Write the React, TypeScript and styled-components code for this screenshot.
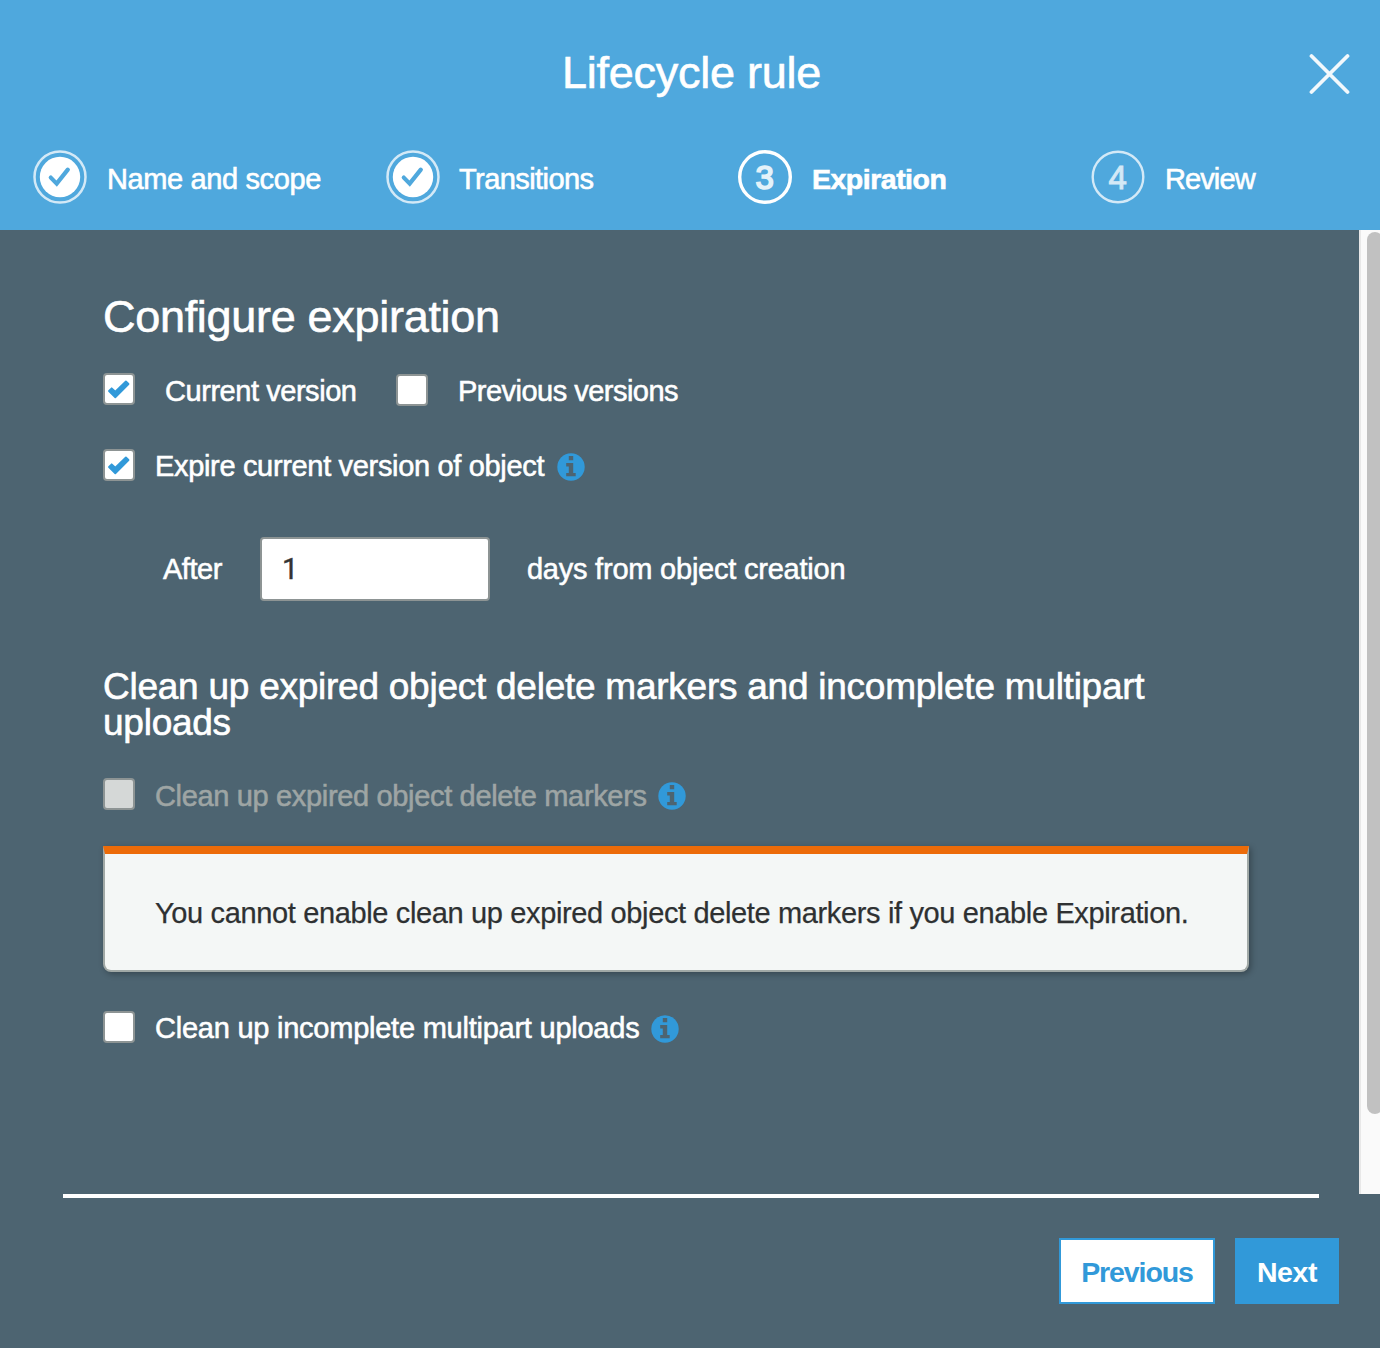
import React, { useState } from "react";
import styled, { createGlobalStyle } from "styled-components";

const Global = createGlobalStyle`
  * { box-sizing: border-box; }
  html, body { margin: 0; padding: 0; }
  body {
    font-family: "Liberation Sans", Arial, sans-serif;
    font-size: 29px;
    color: #fff;
    background: #4d6471;
  }
`;

const Dialog = styled.div`
  width: 1380px;
  height: 1348px;
  display: flex;
  flex-direction: column;
  background: #4d6471;
  overflow: hidden;
`;

const Header = styled.header`
  height: 230px;
  flex: none;
  padding-top: 47px;
  background: #4fa8dd;
`;

const TitleBar = styled.div`
  display: grid;
  grid-template-columns: 80px 1fr 80px;
  align-items: center;
  height: 52px;
`;

const Title = styled.h1`
  grid-column: 2;
  margin: 0;
  padding-left: 3px;
  text-align: center;
  font-size: 45px;
  font-weight: 400;
  line-height: 52px;
  letter-spacing: -0.25px;
  -webkit-text-stroke: 0.6px currentColor;
`;

const CloseButton = styled.button`
  width: 42px;
  height: 42px;
  margin: 2px 0 0 8px;
  padding: 0;
  border: 0;
  background: none;
  color: #fff;
  svg { display: block; }
`;

const Steps = styled.ol`
  display: grid;
  grid-template-columns: 353px 352px 353px 1fr;
  list-style: none;
  margin: 51px 0 0;
  padding: 0 0 0 33px;
`;

const Step = styled.li<{ $gap?: number }>`
  display: flex;
  gap: ${(p) => p.$gap ?? 20}px;
  height: 54px;
  svg { flex: none; display: block; }
`;

const StepLabel = styled.span<{ $active?: boolean; $track?: number }>`
  padding-top: 2px;
  line-height: 54px;
  white-space: nowrap;
  font-size: ${(p) => (p.$active ? 28.5 : 29)}px;
  font-weight: ${(p) => (p.$active ? 700 : 400)};
  letter-spacing: ${(p) => p.$track ?? 0}px;
  -webkit-text-stroke: 0.6px currentColor;
`;

const Main = styled.div`
  display: flex;
  height: 964px;
  flex: none;
`;

const Content = styled.main`
  width: 1359px;
  flex: none;
  padding: 65px 110px 0 103px;
`;

const ScrollTrack = styled.div`
  flex: 1;
  overflow: hidden;
  padding: 2px 0 0 6px;
  border-left: 2px solid #e8e8e8;
  background: #fafafa;
`;

const ScrollThumb = styled.div`
  width: 16px;
  height: 882px;
  border-radius: 8px;
  background: #c1c1c1;
`;

const Heading = styled.h2`
  margin: 0;
  font-size: 45px;
  font-weight: 400;
  line-height: 44px;
  letter-spacing: -0.3px;
  -webkit-text-stroke: 0.6px currentColor;
`;

const Subheading = styled.h3`
  margin: 68px 0 0;
  font-size: 37px;
  font-weight: 400;
  line-height: 36px;
  letter-spacing: -0.25px;
  -webkit-text-stroke: 0.6px currentColor;
`;

const Row = styled.div<{ $top: number; $gap?: number }>`
  display: flex;
  align-items: flex-start;
  height: 34px;
  margin-top: ${(p) => p.$top}px;
  gap: ${(p) => p.$gap ?? 0}px;
`;

const Option = styled.label<{ $gap?: number; $disabled?: boolean }>`
  display: flex;
  align-items: flex-start;
  gap: ${(p) => p.$gap ?? 20}px;
  color: ${(p) => (p.$disabled ? "#9ea5a4" : "#fff")};
`;

const Box = styled.span<{ $disabled?: boolean; $drop?: number }>`
  display: block;
  width: 32px;
  height: 32px;
  flex: none;
  margin-top: ${(p) => p.$drop ?? 0}px;
  border: 2px solid #8d9494;
  border-radius: 4px;
  background: ${(p) => (p.$disabled ? "#d5d8d7" : "#fff")};
  svg { display: block; }
`;

const Caption = styled.span<{ $track?: number; $line?: number }>`
  line-height: ${(p) => p.$line ?? 35}px;
  white-space: nowrap;
  letter-spacing: ${(p) => p.$track ?? 0}px;
  -webkit-text-stroke: 0.55px currentColor;
`;

const InfoSlot = styled.span<{ $left: number }>`
  display: block;
  margin-left: ${(p) => p.$left}px;
  margin-top: 4px;
  svg { display: block; }
`;

const DaysRow = styled.div`
  display: flex;
  align-items: center;
  height: 64px;
  margin-top: 54px;
  padding-left: 60px;
`;

const DaysInput = styled.input`
  width: 230px;
  height: 64px;
  margin: 0 37px 0 38px;
  padding: 0 0 0 20px;
  border: 2px solid #8d9494;
  border-radius: 4px;
  background: #fff;
  color: #333;
  font: 29px Roboto, "Liberation Sans", sans-serif;
  -webkit-text-stroke: 0.4px currentColor;
  outline: none;
`;

const Alert = styled.div`
  width: 1146px;
  height: 126px;
  margin-top: 34px;
  padding-left: 50px;
  border: 2px solid #a1a9a6;
  border-top: 8px solid #ec6b09;
  border-radius: 0 0 8px 8px;
  background: #f4f7f6;
  box-shadow: 2px 2px 6px rgba(0, 0, 0, 0.3);
  color: #2e3132;
  line-height: 119px;
  letter-spacing: -0.36px;
  white-space: nowrap;
  -webkit-text-stroke: 0.25px currentColor;
`;

const Footer = styled.footer`
  flex: 1;
  display: flex;
  flex-direction: column;
  padding: 0 41px 0 63px;
`;

const Rule = styled.hr`
  width: 1256px;
  height: 4px;
  margin: 0;
  border: 0;
  background: #fff;
`;

const Buttons = styled.div`
  display: flex;
  justify-content: flex-end;
  gap: 20px;
  margin-top: 40px;
`;

const Button = styled.button<{ $primary?: boolean; $width: number; $track: number }>`
  width: ${(p) => p.$width}px;
  height: 66px;
  padding: 3px 0 0;
  border: 2px solid #3199d9;
  border-radius: 0;
  background: ${(p) => (p.$primary ? "#3199d9" : "#fff")};
  color: ${(p) => (p.$primary ? "#fff" : "#3199d9")};
  font: 700 28.5px "Liberation Sans", Arial, sans-serif;
  letter-spacing: ${(p) => p.$track}px;
`;

const DoneIcon = () => (
  <svg width="54" height="54" viewBox="0 0 54 54">
    <circle cx="27" cy="27" r="25.5" fill="none" stroke="#fff" strokeWidth="2.5" opacity="0.75" />
    <circle cx="27" cy="27" r="20.2" fill="#fff" />
    <path d="M17.8 27.6 L23.7 33.6 L34.8 19.6" fill="none" stroke="#4fa8dd" strokeWidth="4.2" strokeLinecap="round" />
  </svg>
);

const NumberIcon = ({ n, active }: { n: number; active?: boolean }) => (
  <svg width="54" height="54" viewBox="0 0 54 54">
    <circle cx="27" cy="27" r="25.3" fill="none" stroke="#fff" strokeWidth={active ? 3.4 : 2.4} opacity={active ? 1 : 0.75} />
    <text
      x="26.8"
      y="39"
      textAnchor="middle"
      fontFamily="Liberation Sans, Arial, sans-serif"
      fontSize="33"
      fill="#fff"
      stroke="#fff"
      strokeWidth={active ? 1.7 : 0.9}
      opacity={active ? 0.85 : 0.75}
    >
      {n}
    </text>
  </svg>
);

const InfoIcon = () => (
  <svg width="28" height="28" viewBox="0 0 28 28">
    <circle cx="14" cy="14" r="13.7" fill="#3199d9" />
    <path
      d="M11.8 3.1h4.4v4.2h-4.4z M9.2 10h7v9.9h2.5v3.4H9.2v-3.4h2.6v-6.5H9.2z"
      fill="#4d6471"
    />
  </svg>
);

type CheckboxProps = { checked?: boolean; disabled?: boolean; drop?: number };

const Checkbox = ({ checked, disabled, drop }: CheckboxProps) => (
  <Box $disabled={disabled} $drop={drop} role="checkbox" aria-checked={!!checked} aria-disabled={!!disabled}>
    {checked && (
      <svg width="28" height="28" viewBox="2 2 28 28">
        <path
          d="M6 18 L8.7 15.3 L12.3 18.6 L22.9 8.4 L25.5 11 L12.3 24.4 Z"
          fill="#3199d9"
          stroke="#3199d9"
          strokeWidth="1.8"
          strokeLinejoin="round"
        />
      </svg>
    )}
  </Box>
);

export default function App() {
  const [days, setDays] = useState("1");
  return (
    <>
      <Global />
      <Dialog>
        <Header>
          <TitleBar>
            <Title>Lifecycle rule</Title>
            <CloseButton aria-label="Close">
              <svg width="42" height="42" viewBox="0 0 42 42">
                <path d="M3.5 3 L39.5 39 M39.5 3 L3.5 39" stroke="#fff" strokeWidth="3.8" strokeLinecap="round" opacity="0.93" />
              </svg>
            </CloseButton>
          </TitleBar>
          <Steps>
            <Step><DoneIcon /><StepLabel $track={-0.38}>Name and scope</StepLabel></Step>
            <Step $gap={19}><DoneIcon /><StepLabel $track={-0.57}>Transitions</StepLabel></Step>
            <Step><NumberIcon n={3} active /><StepLabel $active $track={-0.5}>Expiration</StepLabel></Step>
            <Step><NumberIcon n={4} /><StepLabel $track={-0.9}>Review</StepLabel></Step>
          </Steps>
        </Header>
        <Main>
          <Content>
            <Heading>Configure expiration</Heading>
            <Row $top={34} $gap={39}>
              <Option $gap={30}><Checkbox checked /><Caption $line={36} $track={-0.45}>Current version</Caption></Option>
              <Option $gap={30.5}><Checkbox drop={1} /><Caption $line={36} $track={-0.52}>Previous versions</Caption></Option>
            </Row>
            <Row $top={42}>
              <Option $gap={20}><Checkbox checked /><Caption $track={-0.33}>Expire current version of object</Caption></Option>
              <InfoSlot $left={13}><InfoIcon /></InfoSlot>
            </Row>
            <DaysRow>
              <Caption $track={-0.47}>After</Caption>
              <DaysInput value={days} onChange={(e) => setDays(e.target.value)} />
              <Caption $track={-0.22}>days from object creation</Caption>
            </DaysRow>
            <Subheading>Clean up expired object delete markers and incomplete multipart uploads</Subheading>
            <Row $top={37}>
              <Option $gap={20} $disabled><Checkbox disabled /><Caption $line={36} $track={-0.34}>Clean up expired object delete markers</Caption></Option>
              <InfoSlot $left={11.5}><InfoIcon /></InfoSlot>
            </Row>
            <Alert>You cannot enable clean up expired object delete markers if you enable Expiration.</Alert>
            <Row $top={39}>
              <Option $gap={20}><Checkbox /><Caption $track={-0.24}>Clean up incomplete multipart uploads</Caption></Option>
              <InfoSlot $left={11.5}><InfoIcon /></InfoSlot>
            </Row>
          </Content>
          <ScrollTrack><ScrollThumb /></ScrollTrack>
        </Main>
        <Footer>
          <Rule />
          <Buttons>
            <Button $width={156} $track={-1.1}>Previous</Button>
            <Button $primary $width={104} $track={-0.4}>Next</Button>
          </Buttons>
        </Footer>
      </Dialog>
    </>
  );
}
